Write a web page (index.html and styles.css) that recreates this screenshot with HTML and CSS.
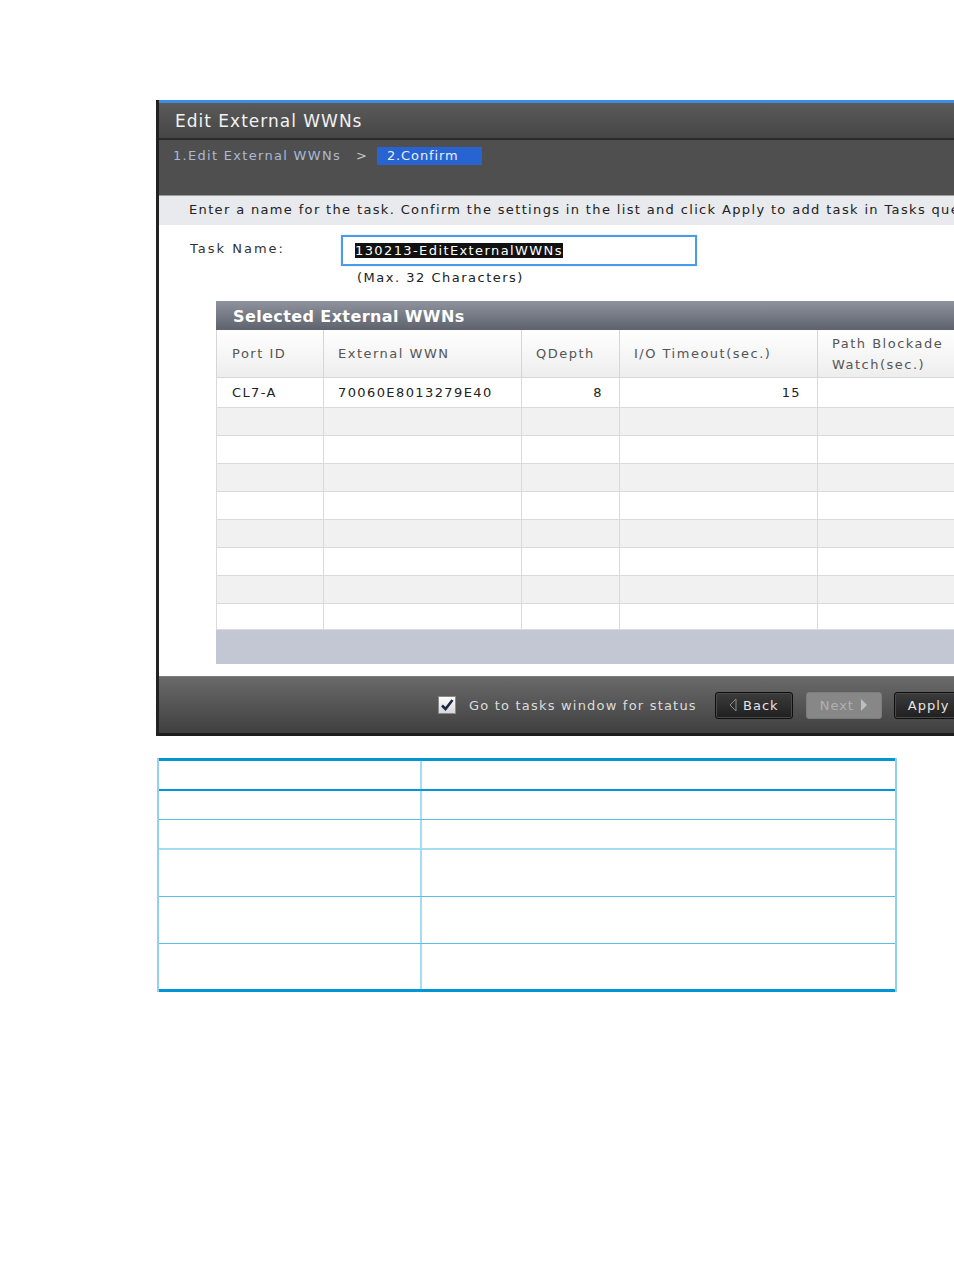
FILE: index.html
```html
<!DOCTYPE html>
<html lang="en">
<head>
    <meta charset="UTF-8">
    <title>Edit External WWNs</title>
    <link rel="stylesheet" href="styles.css">
</head>
<body>
    <div class="shot">
        <div class="dialog">
            <div class="title-bar">Edit External WWNs</div>
            <div class="wizard">
                <span class="step">1.Edit External WWNs</span>
                <span class="sep">&gt;</span>
                <span class="step current">2.Confirm</span>
            </div>
            <div class="hint">Enter a name for the task. Confirm the settings in the list and click Apply to add task in Tasks queue for execution.</div>

            <div class="content">
                <div class="task-row">
                    <label class="task-label">Task Name:</label>
                    <div class="field">
                        <div class="text-input"><span class="selected">130213-EditExternalWWNs</span></div>
                        <div class="note">(Max. 32 Characters)</div>
                    </div>
                </div>

                <div class="panel">
                    <div class="panel-title">Selected External WWNs</div>
                    <table class="grid">
                        <colgroup>
                            <col class="c-port">
                            <col class="c-wwn">
                            <col class="c-depth">
                            <col class="c-timeout">
                            <col class="c-path">
                        </colgroup>
                        <thead>
                            <tr>
                                <th>Port ID</th>
                                <th>External WWN</th>
                                <th>QDepth</th>
                                <th>I/O Timeout(sec.)</th>
                                <th>Path Blockade<br>Watch(sec.)</th>
                            </tr>
                        </thead>
                        <tbody>
                            <tr class="first">
                                <td>CL7-A</td>
                                <td>70060E8013279E40</td>
                                <td class="num">8</td>
                                <td class="num">15</td>
                                <td></td>
                            </tr>
                            <tr class="alt"><td></td><td></td><td></td><td></td><td></td></tr>
                            <tr><td></td><td></td><td></td><td></td><td></td></tr>
                            <tr class="alt"><td></td><td></td><td></td><td></td><td></td></tr>
                            <tr><td></td><td></td><td></td><td></td><td></td></tr>
                            <tr class="alt"><td></td><td></td><td></td><td></td><td></td></tr>
                            <tr><td></td><td></td><td></td><td></td><td></td></tr>
                            <tr class="alt"><td></td><td></td><td></td><td></td><td></td></tr>
                            <tr class="last"><td></td><td></td><td></td><td></td><td></td></tr>
                        </tbody>
                    </table>
                    <div class="panel-foot"></div>
                </div>
            </div>

            <div class="footer">
                <span class="checkbox">
                    <svg width="14" height="14" viewBox="0 0 14 14"><path d="M2 7.5 L5.5 11 L12.5 2" fill="none" stroke="#1c2740" stroke-width="2.6"/></svg>
                </span>
                <span class="check-text">Go to tasks window for status</span>
                <button class="btn back"><svg width="8" height="14" viewBox="0 0 8 14"><path d="M7 1 L1 7 L7 13 Z" fill="none" stroke="#8a8a8a" stroke-width="1"/></svg>Back</button>
                <button class="btn next" disabled>Next<svg width="8" height="14" viewBox="0 0 8 14"><path d="M1 1 L7 7 L1 13 Z" fill="#b9c0c4"/></svg></button>
                <button class="btn apply">Apply</button>
            </div>
        </div>
    </div>

    <div class="spec">
        <div class="spec-row head"><div></div><div></div></div>
        <div class="spec-row r1"><div></div><div></div></div>
        <div class="spec-row r2"><div></div><div></div></div>
        <div class="spec-row r3"><div></div><div></div></div>
        <div class="spec-row r4"><div></div><div></div></div>
        <div class="spec-row r5"><div></div><div></div></div>
    </div>
</body>
</html>
```

FILE: styles.css
```css
body {
    margin: 0;
    background: #fff;
    font-family: "DejaVu Sans", Verdana, sans-serif;
    font-size: 13px;
    color: #222;
}
.shot {
    margin: 100px 0 0 156px;
    width: 798px;
    height: 636px;
    overflow: hidden;
}
.dialog {
    width: 860px;
    border-left: 3px solid #222;
    background: #fff;
}
.title-bar {
    height: 33px;
    line-height: 33px;
    padding: 2px 0 0 16px;
    border-top: 3px solid #3a8de0;
    background: linear-gradient(#5a5a5a, #464646);
    color: #f2f2f2;
    font-size: 17px;
    letter-spacing: 1px;
    border-bottom: 2px solid #2a2a2a;
}
.wizard {
    height: 48px;
    padding: 7px 0 0 14px;
    background: #4f4f4f;
    border-bottom: 1px solid #9a9a9a;
    display: flex;
    align-items: flex-start;
}
.step {
    height: 18px;
    line-height: 18px;
    color: #a9b9d6;
    letter-spacing: 1.3px;
}
.step.current {
    width: 85px;
    padding: 0 10px;
    background: #2863d2;
    color: #e8eefc;
    letter-spacing: 0.9px;
}
.sep {
    height: 18px;
    line-height: 18px;
    color: #c8c8c8;
    margin: 0 10px 0 15px;
}
.hint {
    height: 29px;
    line-height: 27px;
    padding-left: 30px;
    background: #e8eaee;
    white-space: nowrap;
    overflow: hidden;
    letter-spacing: 1.35px;
}
.content {
    padding: 10px 0 12px 0;
}
.task-row {
    display: flex;
    padding-left: 31px;
}
.task-label {
    width: 151px;
    padding-top: 6px;
    color: #333;
    letter-spacing: 2px;
}
.text-input {
    width: 340px;
    height: 27px;
    padding-left: 12px;
    border: 2px solid #4b9be8;
    box-shadow: 0 0 1px #9cc8f2;
    display: flex;
    align-items: center;
}
.selected {
    background: #111;
    color: #fff;
    line-height: 15px;
    letter-spacing: 1.4px;
}
.note {
    margin: 4px 0 0 16px;
    color: #222;
    letter-spacing: 1.5px;
}
.panel {
    margin: 16px 0 0 57px;
    width: 751px;
}
.panel-title {
    height: 29px;
    line-height: 31px;
    padding-left: 17px;
    background: linear-gradient(#8f939d, #5e626c);
    color: #fff;
    font-size: 16px;
    font-weight: bold;
    letter-spacing: 0.4px;
}
.grid {
    width: 751px;
    border-collapse: collapse;
    table-layout: fixed;
}
.c-port { width: 107px; }
.c-wwn { width: 198px; }
.c-depth { width: 98px; }
.c-timeout { width: 198px; }
.c-path { width: 150px; }
.grid th {
    height: 47px;
    padding: 0 0 0 14px;
    text-align: left;
    font-weight: normal;
    color: #555;
    line-height: 21px;
    letter-spacing: 1.5px;
    background: linear-gradient(#ffffff, #ededed);
    border: 1px solid #d6d6d6;
    border-top: none;
    white-space: nowrap;
}
.grid th:first-child {
    padding-left: 15px;
}
.grid td {
    height: 27px;
    padding: 0 0 0 14px;
    border: 1px solid #dadada;
    color: #222;
    letter-spacing: 1.4px;
}
.grid td:first-child {
    padding-left: 15px;
}
.grid tr.first td {
    height: 29px;
}
.grid tr.last td {
    height: 25px;
}
.grid tr.alt td {
    background: #f1f1f1;
}
.grid td.num {
    text-align: right;
    padding-right: 16px;
}
.panel-foot {
    height: 34px;
    background: #c3c7d3;
}
.footer {
    height: 56px;
    padding-left: 279px;
    border-top: 1px solid #7d7d7d;
    border-bottom: 3px solid #1c1c1c;
    background: linear-gradient(#6a6a6a, #3f3f3f);
    display: flex;
    align-items: center;
}
.checkbox {
    width: 16px;
    height: 16px;
    border: 1px solid #8a8a8a;
    background: linear-gradient(#fdfdfd, #d8d8d8);
    display: flex;
    align-items: center;
    justify-content: center;
}
.check-text {
    margin: 0 18px 0 13px;
    color: #dcdcdc;
    letter-spacing: 1.2px;
}
.btn {
    height: 27px;
    border-radius: 3px;
    font-family: "DejaVu Sans", Verdana, sans-serif;
    font-size: 13px;
    letter-spacing: 1px;
    display: flex;
    align-items: center;
    justify-content: center;
    gap: 6px;
    padding: 0;
}
.back, .apply {
    background: linear-gradient(#3c3c3c, #1f1f1f);
    border: 1px solid #0e0e0e;
    box-shadow: inset 0 0 0 1px #4a4a4a;
    color: #e4e4e4;
}
.back {
    width: 78px;
}
.next {
    width: 76px;
    margin-left: 13px;
    background: #878787;
    border: 1px solid #7c7c7c;
    color: #b0b0b0;
}
.apply {
    width: 74px;
    margin-left: 12px;
    justify-content: flex-start;
    padding-left: 13px;
}
.spec {
    margin: 22px 0 0 157px;
    width: 740px;
    border-left: 2px solid #8fd1ee;
    border-right: 2px solid #8fd1ee;
    box-sizing: border-box;
}
.spec-row {
    display: grid;
    grid-template-columns: 263px 1fr;
    box-sizing: border-box;
    border-bottom: 1px solid #5cbde6;
}
.spec-row div:first-child {
    border-right: 2px solid #a6dcf1;
}
.spec-row.head {
    height: 33px;
    border-top: 3px solid #0096d6;
    border-bottom: 2px solid #0096d6;
}
.spec-row.r1 { height: 29px; }
.spec-row.r2 { height: 30px; border-bottom: 2px solid #a6dcf1; }
.spec-row.r3 { height: 47px; }
.spec-row.r4 { height: 47px; }
.spec-row.r5 { height: 48px; border-bottom: 3px solid #0096d6; }
```
